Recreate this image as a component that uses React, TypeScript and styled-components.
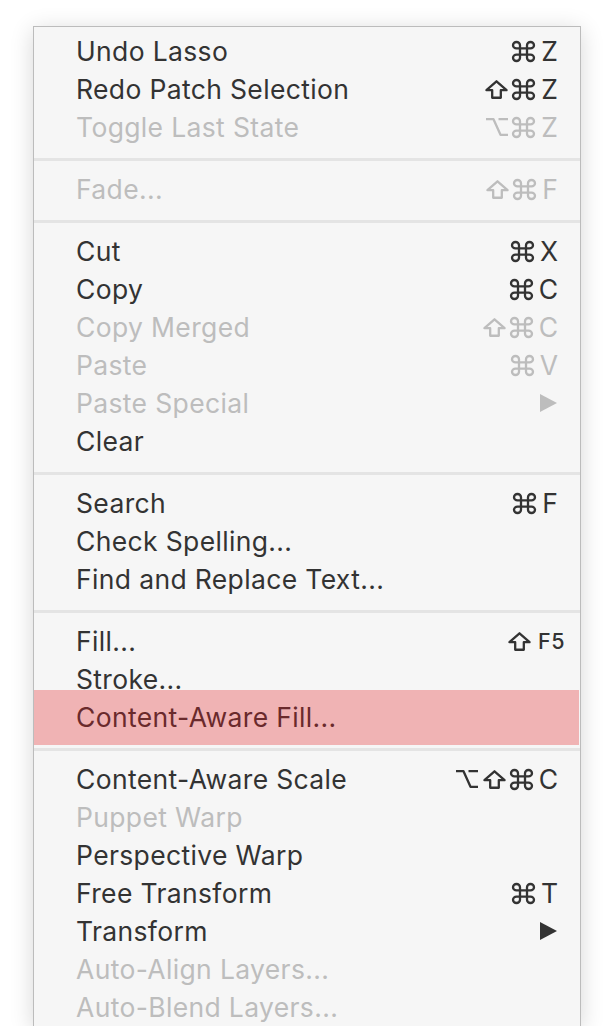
import React from 'react'
import styled, { createGlobalStyle } from 'styled-components'

const GlobalStyle = createGlobalStyle`
  html, body {
    margin: 0;
    padding: 0;
    background: #ffffff;
  }
  body {
    font-family: Inter, Roboto, "Helvetica Neue", Arial, sans-serif;
    -webkit-font-smoothing: antialiased;
  }
`

const Page = styled.div`
  height: 1026px;
  overflow: hidden;
  padding: 26px 0 0 33px;
  box-sizing: border-box;
`

const Menu = styled.div`
  width: 548px;
  box-sizing: border-box;
  background: #f6f6f6;
  border: 1px solid #bcbcbc;
  box-shadow: 0 4px 22px rgba(0, 0, 0, 0.16);
  padding-top: 5px;
`

const Row = styled.div<{ $disabled?: boolean; $active?: boolean }>`
  position: relative;
  height: 38px;
  display: flex;
  align-items: center;
  justify-content: space-between;
  padding: 0 22px 0 42px;
  font-size: 26.5px;
  letter-spacing: 0.35px;
  color: ${(p) => (p.$active ? '#6a2a2c' : p.$disabled ? '#bdbdbd' : '#333333')};

  ${(p) =>
    p.$active &&
    `
    &::before {
      content: '';
      position: absolute;
      left: 0;
      right: 1px;
      top: -8px;
      bottom: -9px;
      background: #f0b3b4;
    }
  `}
`

const Label = styled.span`
  position: relative;
`

const Shortcut = styled.span<{ $small?: boolean }>`
  position: relative;
  display: flex;
  align-items: center;
  gap: 5px;
  margin-right: ${(p) => (p.$small ? '-7px' : '0')};
`

const Key = styled.span<{ $small?: boolean }>`
  margin-left: 2px;
  letter-spacing: ${(p) => (p.$small ? '0.5px' : '0')};
  font-size: ${(p) => (p.$small ? '21.5px' : '26.5px')};
  font-weight: ${(p) => (p.$small ? 500 : 400)};
`

const Glyph = styled.svg`
  display: block;
  fill: none;
  stroke: currentColor;
  stroke-width: 2.3px;
  stroke-linejoin: round;
  overflow: visible;
`

const SubmenuArrow = styled.svg`
  display: block;
  fill: currentColor;
  margin-right: 1px;
`

const Separator = styled.div`
  height: 24px;
  display: flex;
  align-items: center;

  &::after {
    content: '';
    flex: 1;
    height: 3px;
    margin-top: 2px;
    background: #e4e4e4;
  }
`

const CommandIcon = () => (
  <Glyph width="21" height="19" viewBox="3 3 18 18" preserveAspectRatio="none">
    <path
      vectorEffect="non-scaling-stroke"
      d="M15 6v12a3 3 0 1 0 3-3H6a3 3 0 1 0 3 3V6a3 3 0 1 0-3 3h12a3 3 0 1 0-3-3"
    />
  </Glyph>
)

const ShiftIcon = () => (
  <Glyph width="23" height="19" viewBox="4 4 16 15" preserveAspectRatio="none">
    <path vectorEffect="non-scaling-stroke" d="M9 18v-6H5l7-7 7 7h-4v6H9z" />
  </Glyph>
)

const OptionIcon = () => (
  <Glyph width="22" height="18" viewBox="0 0 22 18" preserveAspectRatio="none">
    <path vectorEffect="non-scaling-stroke" d="M0 1.2h7.5l7 15.6H22M12.5 1.2H22" />
  </Glyph>
)

const Triangle = () => (
  <SubmenuArrow width="17" height="18" viewBox="0 0 17 18">
    <polygon points="0,0 17,9 0,18" />
  </SubmenuArrow>
)

type Item = {
  label: string
  keys?: string
  disabled?: boolean
  active?: boolean
  submenu?: boolean
  small?: boolean
}

const groups: Item[][] = [
  [
    { label: 'Undo Lasso', keys: '⌘Z' },
    { label: 'Redo Patch Selection', keys: '⇧⌘Z' },
    { label: 'Toggle Last State', keys: '⌥⌘Z', disabled: true },
  ],
  [{ label: 'Fade...', keys: '⇧⌘F', disabled: true }],
  [
    { label: 'Cut', keys: '⌘X' },
    { label: 'Copy', keys: '⌘C' },
    { label: 'Copy Merged', keys: '⇧⌘C', disabled: true },
    { label: 'Paste', keys: '⌘V', disabled: true },
    { label: 'Paste Special', submenu: true, disabled: true },
    { label: 'Clear' },
  ],
  [
    { label: 'Search', keys: '⌘F' },
    { label: 'Check Spelling...' },
    { label: 'Find and Replace Text...' },
  ],
  [
    { label: 'Fill...', keys: '⇧F5', small: true },
    { label: 'Stroke...' },
    { label: 'Content-Aware Fill...', active: true },
  ],
  [
    { label: 'Content-Aware Scale', keys: '⌥⇧⌘C' },
    { label: 'Puppet Warp', disabled: true },
    { label: 'Perspective Warp' },
    { label: 'Free Transform', keys: '⌘T' },
    { label: 'Transform', submenu: true },
    { label: 'Auto-Align Layers...', disabled: true },
    { label: 'Auto-Blend Layers...', disabled: true },
  ],
]

const modifierIcons: Record<string, React.ReactNode> = {
  '⌘': <CommandIcon />,
  '⇧': <ShiftIcon />,
  '⌥': <OptionIcon />,
}

const renderKeys = (keys: string, small?: boolean) => {
  const chars = Array.from(keys)
  const mods = chars.filter((c) => c in modifierIcons)
  const rest = chars.filter((c) => !(c in modifierIcons)).join('')
  return (
    <Shortcut $small={small}>
      {mods.map((m, i) => (
        <React.Fragment key={i}>{modifierIcons[m]}</React.Fragment>
      ))}
      <Key $small={small}>{rest}</Key>
    </Shortcut>
  )
}

const App = () => {
  return (
    <>
      <GlobalStyle />
      <Page>
        <Menu>
          {groups.map((group, gi) => (
            <React.Fragment key={gi}>
              {gi > 0 && <Separator />}
              {group.map((item) => (
                <Row key={item.label} $disabled={item.disabled} $active={item.active}>
                  <Label>{item.label}</Label>
                  {item.keys && renderKeys(item.keys, item.small)}
                  {item.submenu && <Triangle />}
                </Row>
              ))}
            </React.Fragment>
          ))}
        </Menu>
      </Page>
    </>
  )
}

export default App
